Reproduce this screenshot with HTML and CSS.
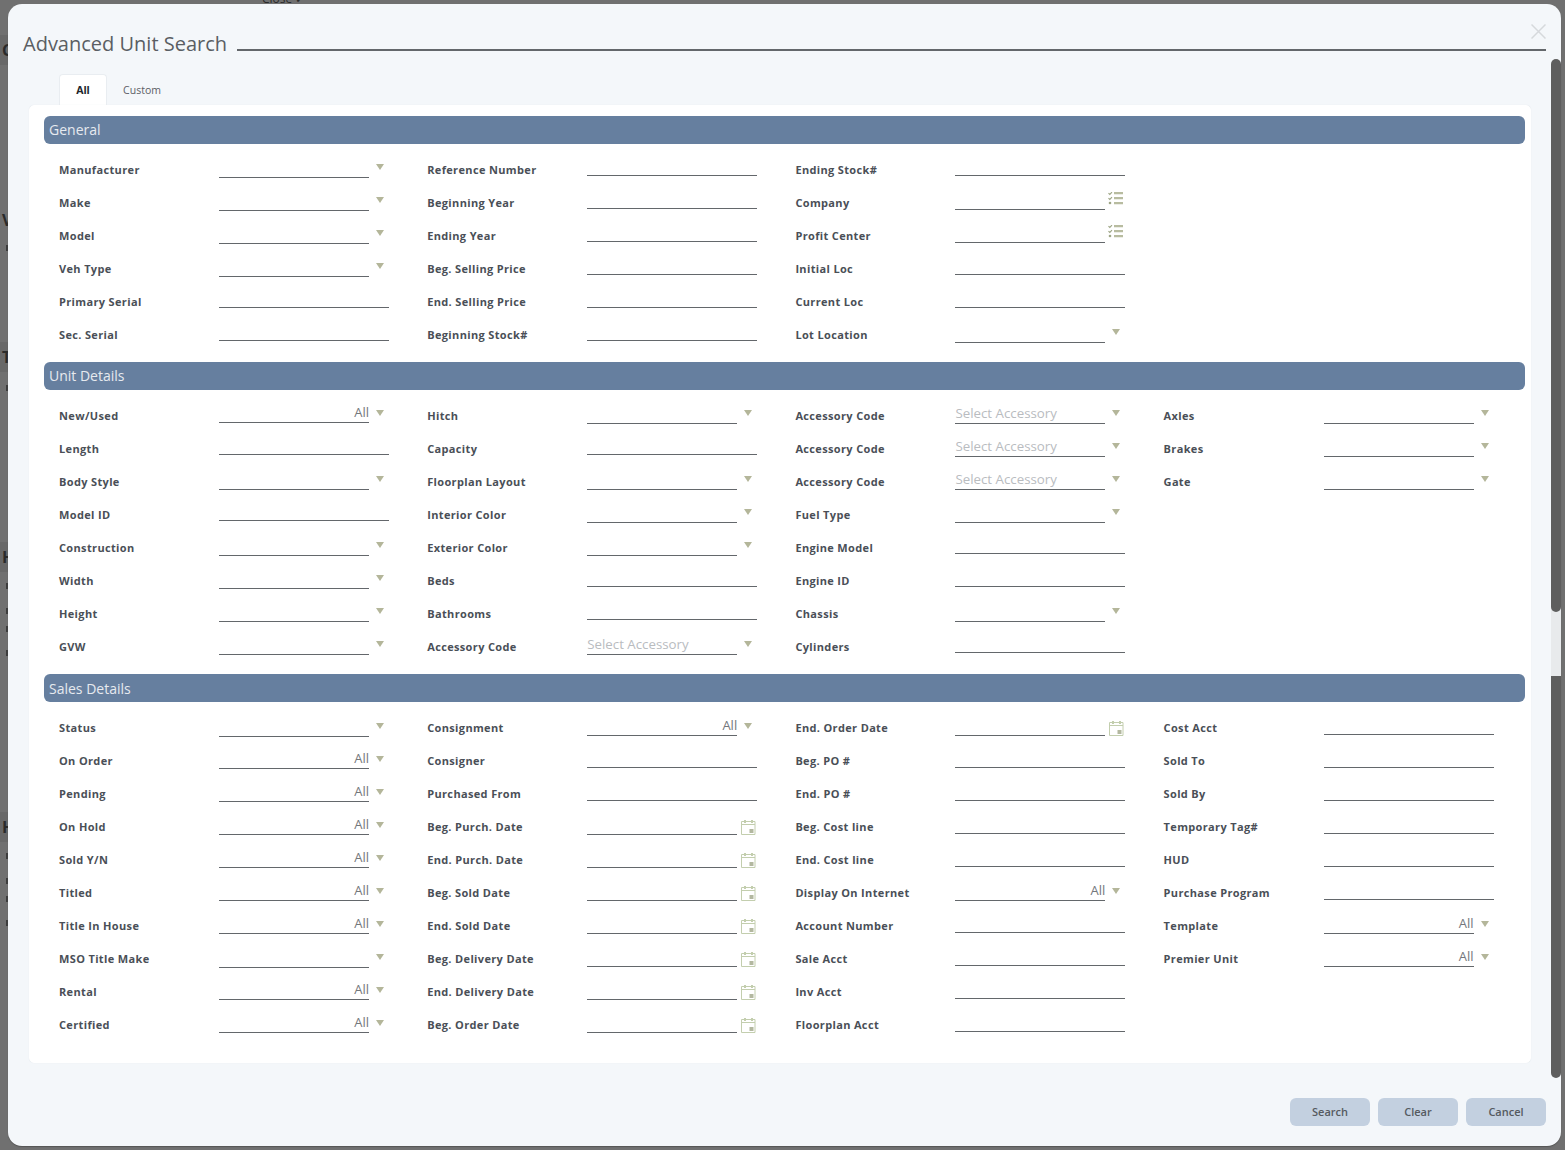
FILE: index.html
```html
<!DOCTYPE html>
<html lang="en">
<head>
<meta charset="utf-8">
<title>Advanced Unit Search</title>
<link rel="stylesheet" href="styles.css">
</head>
<body>
<svg class="defs" width="0" height="0" aria-hidden="true">
  <symbol id="cal" viewBox="0 0 15 16">
    <path d="M.5 2.500h13.500v13H.5zM.5 5.500h13.500" fill="none" stroke="#c3ceae"/>
    <path d="M3 1h2v3H3zM10 1h2v3h-2z" fill="#c3ceae"/>
    <rect x="8.500" y="10" width="4" height="4" fill="#b3b8a0"/>
  </symbol>
  <symbol id="lst" viewBox="0 0 15 13">
    <path d="M6 0h9v2.200H6zM6 5h9v2.200H6zM6 10h9v2.200H6z" fill="#b8bca0"/>
    <path d="M.5 1.200l1.300 1.300L4 .200M.5 6.200l1.300 1.300L4 5.200" fill="none" stroke="#9ea686" stroke-width="1.200"/>
    <circle cx="2" cy="11" r="1.300" fill="#9ea686"/>
  </symbol>
</svg>

<div class="behind">
  <span class="bg-close">Close ✓</span>
  <span class="bg-l bg-c">C</span>
  <span class="bg-l bg-v">V</span>
  <span class="bg-l bg-t">T</span>
  <span class="bg-l bg-h1">H</span>
  <span class="bg-l bg-h2">H</span>
  <i class="bg-m m1"></i><i class="bg-m m2"></i>
  <i class="bg-m m3"></i><i class="bg-m m4"></i><i class="bg-m m5"></i><i class="bg-m m6"></i>
  <i class="bg-m m7"></i><i class="bg-m m8"></i><i class="bg-m m9"></i><i class="bg-m m10"></i>
</div>

<main class="modal">
  <header class="title-row">
    <h1 class="title">Advanced Unit Search</h1>
    <div class="title-rule"></div>
  </header>
  <svg class="close" width="15" height="15" viewBox="0 0 15 15"><path d="M.5.500l14 14M14.500.500l-14 14" stroke="#d6d9dc" stroke-width="1.500" fill="none"/></svg>

  <nav class="tabs">
    <div class="tab active">All</div>
    <div class="tab">Custom</div>
  </nav>

  <div class="panel">
    <section class="section">
      <h2 class="bar">General</h2>
      <div class="cols">
        <div class="col">
          <div class="f"><label>Manufacturer</label><div class="c"><div class="i s"></div><i class="caret"></i></div></div>
          <div class="f"><label>Make</label><div class="c"><div class="i s"></div><i class="caret"></i></div></div>
          <div class="f"><label>Model</label><div class="c"><div class="i s"></div><i class="caret"></i></div></div>
          <div class="f"><label>Veh Type</label><div class="c"><div class="i s"></div><i class="caret"></i></div></div>
          <div class="f"><label>Primary Serial</label><div class="c"><div class="i t"></div></div></div>
          <div class="f"><label>Sec. Serial</label><div class="c"><div class="i t"></div></div></div>
        </div>
        <div class="col">
          <div class="f"><label>Reference Number</label><div class="c"><div class="i t"></div></div></div>
          <div class="f"><label>Beginning Year</label><div class="c"><div class="i t"></div></div></div>
          <div class="f"><label>Ending Year</label><div class="c"><div class="i t"></div></div></div>
          <div class="f"><label>Beg. Selling Price</label><div class="c"><div class="i t"></div></div></div>
          <div class="f"><label>End. Selling Price</label><div class="c"><div class="i t"></div></div></div>
          <div class="f"><label>Beginning Stock#</label><div class="c"><div class="i t"></div></div></div>
        </div>
        <div class="col">
          <div class="f"><label>Ending Stock#</label><div class="c"><div class="i t"></div></div></div>
          <div class="f"><label>Company</label><div class="c"><div class="i v"></div><svg class="ico-lst"><use href="#lst"/></svg></div></div>
          <div class="f"><label>Profit Center</label><div class="c"><div class="i v"></div><svg class="ico-lst"><use href="#lst"/></svg></div></div>
          <div class="f"><label>Initial Loc</label><div class="c"><div class="i t"></div></div></div>
          <div class="f"><label>Current Loc</label><div class="c"><div class="i t"></div></div></div>
          <div class="f"><label>Lot Location</label><div class="c"><div class="i s"></div><i class="caret"></i></div></div>
        </div>
      </div>
    </section>

    <section class="section">
      <h2 class="bar">Unit Details</h2>
      <div class="cols">
        <div class="col">
          <div class="f"><label>New/Used</label><div class="c"><div class="i v">All</div><i class="caret"></i></div></div>
          <div class="f"><label>Length</label><div class="c"><div class="i t"></div></div></div>
          <div class="f"><label>Body Style</label><div class="c"><div class="i s"></div><i class="caret"></i></div></div>
          <div class="f"><label>Model ID</label><div class="c"><div class="i t"></div></div></div>
          <div class="f"><label>Construction</label><div class="c"><div class="i s"></div><i class="caret"></i></div></div>
          <div class="f"><label>Width</label><div class="c"><div class="i s"></div><i class="caret"></i></div></div>
          <div class="f"><label>Height</label><div class="c"><div class="i s"></div><i class="caret"></i></div></div>
          <div class="f"><label>GVW</label><div class="c"><div class="i s"></div><i class="caret"></i></div></div>
        </div>
        <div class="col">
          <div class="f"><label>Hitch</label><div class="c"><div class="i s"></div><i class="caret"></i></div></div>
          <div class="f"><label>Capacity</label><div class="c"><div class="i t"></div></div></div>
          <div class="f"><label>Floorplan Layout</label><div class="c"><div class="i s"></div><i class="caret"></i></div></div>
          <div class="f"><label>Interior Color</label><div class="c"><div class="i s"></div><i class="caret"></i></div></div>
          <div class="f"><label>Exterior Color</label><div class="c"><div class="i s"></div><i class="caret"></i></div></div>
          <div class="f"><label>Beds</label><div class="c"><div class="i t"></div></div></div>
          <div class="f"><label>Bathrooms</label><div class="c"><div class="i t"></div></div></div>
          <div class="f"><label>Accessory Code</label><div class="c"><div class="i s ph">Select Accessory</div><i class="caret"></i></div></div>
        </div>
        <div class="col">
          <div class="f"><label>Accessory Code</label><div class="c"><div class="i s ph">Select Accessory</div><i class="caret"></i></div></div>
          <div class="f"><label>Accessory Code</label><div class="c"><div class="i s ph">Select Accessory</div><i class="caret"></i></div></div>
          <div class="f"><label>Accessory Code</label><div class="c"><div class="i s ph">Select Accessory</div><i class="caret"></i></div></div>
          <div class="f"><label>Fuel Type</label><div class="c"><div class="i s"></div><i class="caret"></i></div></div>
          <div class="f"><label>Engine Model</label><div class="c"><div class="i t"></div></div></div>
          <div class="f"><label>Engine ID</label><div class="c"><div class="i t"></div></div></div>
          <div class="f"><label>Chassis</label><div class="c"><div class="i s"></div><i class="caret"></i></div></div>
          <div class="f"><label>Cylinders</label><div class="c"><div class="i t"></div></div></div>
        </div>
        <div class="col">
          <div class="f"><label>Axles</label><div class="c"><div class="i s"></div><i class="caret"></i></div></div>
          <div class="f"><label>Brakes</label><div class="c"><div class="i s"></div><i class="caret"></i></div></div>
          <div class="f"><label>Gate</label><div class="c"><div class="i s"></div><i class="caret"></i></div></div>
        </div>
      </div>
    </section>

    <section class="section sales">
      <h2 class="bar">Sales Details</h2>
      <div class="cols">
        <div class="col">
          <div class="f"><label>Status</label><div class="c"><div class="i s"></div><i class="caret"></i></div></div>
          <div class="f"><label>On Order</label><div class="c"><div class="i v">All</div><i class="caret"></i></div></div>
          <div class="f"><label>Pending</label><div class="c"><div class="i v">All</div><i class="caret"></i></div></div>
          <div class="f"><label>On Hold</label><div class="c"><div class="i v">All</div><i class="caret"></i></div></div>
          <div class="f"><label>Sold Y/N</label><div class="c"><div class="i v">All</div><i class="caret"></i></div></div>
          <div class="f"><label>Titled</label><div class="c"><div class="i v">All</div><i class="caret"></i></div></div>
          <div class="f"><label>Title In House</label><div class="c"><div class="i v">All</div><i class="caret"></i></div></div>
          <div class="f"><label>MSO Title Make</label><div class="c"><div class="i s"></div><i class="caret"></i></div></div>
          <div class="f"><label>Rental</label><div class="c"><div class="i v">All</div><i class="caret"></i></div></div>
          <div class="f"><label>Certified</label><div class="c"><div class="i v">All</div><i class="caret"></i></div></div>
        </div>
        <div class="col">
          <div class="f"><label>Consignment</label><div class="c"><div class="i v">All</div><i class="caret"></i></div></div>
          <div class="f"><label>Consigner</label><div class="c"><div class="i t"></div></div></div>
          <div class="f"><label>Purchased From</label><div class="c"><div class="i t"></div></div></div>
          <div class="f"><label>Beg. Purch. Date</label><div class="c"><div class="i v"></div><svg class="ico-cal"><use href="#cal"/></svg></div></div>
          <div class="f"><label>End. Purch. Date</label><div class="c"><div class="i v"></div><svg class="ico-cal"><use href="#cal"/></svg></div></div>
          <div class="f"><label>Beg. Sold Date</label><div class="c"><div class="i v"></div><svg class="ico-cal"><use href="#cal"/></svg></div></div>
          <div class="f"><label>End. Sold Date</label><div class="c"><div class="i v"></div><svg class="ico-cal"><use href="#cal"/></svg></div></div>
          <div class="f"><label>Beg. Delivery Date</label><div class="c"><div class="i v"></div><svg class="ico-cal"><use href="#cal"/></svg></div></div>
          <div class="f"><label>End. Delivery Date</label><div class="c"><div class="i v"></div><svg class="ico-cal"><use href="#cal"/></svg></div></div>
          <div class="f"><label>Beg. Order Date</label><div class="c"><div class="i v"></div><svg class="ico-cal"><use href="#cal"/></svg></div></div>
        </div>
        <div class="col">
          <div class="f"><label>End. Order Date</label><div class="c"><div class="i v"></div><svg class="ico-cal"><use href="#cal"/></svg></div></div>
          <div class="f"><label>Beg. PO #</label><div class="c"><div class="i t"></div></div></div>
          <div class="f"><label>End. PO #</label><div class="c"><div class="i t"></div></div></div>
          <div class="f"><label>Beg. Cost line</label><div class="c"><div class="i t"></div></div></div>
          <div class="f"><label>End. Cost line</label><div class="c"><div class="i t"></div></div></div>
          <div class="f"><label>Display On Internet</label><div class="c"><div class="i v">All</div><i class="caret"></i></div></div>
          <div class="f"><label>Account Number</label><div class="c"><div class="i t"></div></div></div>
          <div class="f"><label>Sale Acct</label><div class="c"><div class="i t"></div></div></div>
          <div class="f"><label>Inv Acct</label><div class="c"><div class="i t"></div></div></div>
          <div class="f"><label>Floorplan Acct</label><div class="c"><div class="i t"></div></div></div>
        </div>
        <div class="col">
          <div class="f"><label>Cost Acct</label><div class="c"><div class="i t"></div></div></div>
          <div class="f"><label>Sold To</label><div class="c"><div class="i t"></div></div></div>
          <div class="f"><label>Sold By</label><div class="c"><div class="i t"></div></div></div>
          <div class="f"><label>Temporary Tag#</label><div class="c"><div class="i t"></div></div></div>
          <div class="f"><label>HUD</label><div class="c"><div class="i t"></div></div></div>
          <div class="f"><label>Purchase Program</label><div class="c"><div class="i t"></div></div></div>
          <div class="f"><label>Template</label><div class="c"><div class="i v">All</div><i class="caret"></i></div></div>
          <div class="f"><label>Premier Unit</label><div class="c"><div class="i v">All</div><i class="caret"></i></div></div>
        </div>
      </div>
    </section>
  </div>

  <footer class="actions">
    <button class="btn">Search</button>
    <button class="btn">Clear</button>
    <button class="btn">Cancel</button>
  </footer>

  <div class="scroll-gap"></div>
  <div class="scroll scroll-a"></div>
  <div class="scroll scroll-b"></div>
</main>
</body>
</html>
```

FILE: styles.css
```css
* { box-sizing: border-box; }
html, body { margin: 0; height: 100%; overflow: hidden; }
body {
  background: #707070;
  font-family: "Open Sans", "Liberation Sans", sans-serif;
  padding: 4px 4px 4px 8px;
}
.defs { position: absolute; }

.behind span { position: absolute; color: #2a2a2a; }
.bg-close { left: 262px; top: -10px; font-size: 12px; }
.bg-l {
  left: 0;
  width: 8px;
  padding-left: 2px;
  overflow: hidden;
  font-size: 16px;
  font-weight: 700;
  line-height: 30px;
}
.bg-c { top: 35px; background: #686868; }
.bg-v { top: 205px; }
.bg-t { top: 342px; background: #686868; }
.bg-h1 { top: 542px; background: #686868; }
.bg-h2 { top: 812px; background: #686868; }
.bg-m { position: absolute; left: 6px; width: 2px; height: 6px; background: #3c3c3c; }
.m1 { top: 245px; }
.m2 { top: 385px; }
.m3 { top: 583px; }
.m4 { top: 608px; }
.m5 { top: 626px; }
.m6 { top: 650px; }
.m7 { top: 853px; }
.m8 { top: 878px; }
.m9 { top: 896px; }
.m10 { top: 920px; }

.modal {
  position: relative;
  height: 1142px;
  background: #f4f7fa;
  border-radius: 14px;
  box-shadow: 0 1px 1px #555;
  display: flex;
  flex-direction: column;
  padding: 27px 15px 20px 21px;
}

.title-row { display: flex; align-items: flex-start; margin-left: -6px; height: 26px; }
.title { margin: 0; font-size: 20px; font-weight: 400; line-height: 25px; color: #5a5e63; }
.title-rule { flex: 1; margin: 18px 0 0 10px; border-top: 2px solid #63676b; }
.close { position: absolute; right: 15px; top: 20px; }

.tabs { display: flex; margin: 17px 0 0 30px; height: 31px; }
.tab {
  width: 48px;
  height: 31px;
  line-height: 33px;
  font-size: 10.5px;
  color: #5c6066;
  text-align: center;
}
.tab + .tab { width: 70px; }
.tab.active {
  background: #fff;
  border: 1px solid #e9edf1;
  border-bottom: 0;
  border-radius: 4px 4px 0 0;
  color: #22262c;
  font-weight: 700;
  line-height: 30px;
}

.panel {
  width: 1502px;
  height: 958px;
  background: #fff;
  border: 1px solid #fff;
  box-shadow: 0 0 1px #dfe4ea;
  border-radius: 5px;
  padding: 10px 5px 0 14px;
}
.section { margin-bottom: 10.5px; }
.bar {
  margin: 0;
  height: 28px;
  line-height: 28px;
  padding-left: 5px;
  background: #667f9f;
  border-radius: 6px;
  color: #e6eaef;
  font-size: 14px;
  font-weight: 400;
}
.sales .bar { line-height: 30px; }
.cols {
  display: grid;
  grid-template-columns: repeat(4, 368.2px);
  padding: 9.5px 0 0 15px;
}
.sales .cols { padding-top: 10.5px; }

.f { display: flex; height: 33px; }
.f label {
  width: 160px;
  flex: none;
  padding-top: 8.5px;
  font-size: 11px;
  line-height: 16px;
  font-weight: 700;
  letter-spacing: .35px;
  color: #4a4f57;
}
.sales .f label { padding-top: 7.5px; }
.c { display: flex; width: 170px; align-items: flex-start; }
.i {
  border-bottom: 1px solid #63676b;
  font-size: 13px;
  line-height: 18px;
  color: #73777c;
  text-align: right;
  white-space: nowrap;
}
.t { width: 170px; height: 22px; }
.s { width: 150px; height: 24px; }
.v { width: 150px; height: 23px; padding-top: 3px; }
.ph { font-size: 13.3px; color: #b9bcbf; text-align: left; padding-top: 4px; height: 24px; }

.caret {
  flex: none;
  margin: 10.5px 0 0 7px;
  border-style: solid;
  border-width: 6px 4px 0;
  border-color: #b4b69a transparent transparent;
}
.sales .caret { margin-top: 10px; }
.ico-cal { flex: none; width: 15px; height: 16px; margin: 8px 0 0 4px; }
.sales .ico-cal { margin-top: 7px; }
.ico-lst { flex: none; width: 15px; height: 13px; margin: 5px 0 0 3px; }

.actions { margin-top: auto; display: flex; justify-content: flex-end; gap: 8px; }
.btn {
  width: 80px;
  height: 28px;
  border: 0;
  padding: 0 0 2px;
  border-radius: 6px;
  background: #c3d0e0;
  color: #555a60;
  font: 600 11px "Open Sans", "Liberation Sans", sans-serif;
}

.scroll { position: absolute; left: 1543px; width: 10px; background: #5e5e5e; }
.scroll-a { top: 55px; height: 553px; border-radius: 5px; }
.scroll-gap { position: absolute; left: 1543px; width: 10px; top: 600px; height: 75px; background: #e8eaec; }
.scroll-b { top: 672px; height: 402px; border-radius: 0 0 5px 5px; }
```
